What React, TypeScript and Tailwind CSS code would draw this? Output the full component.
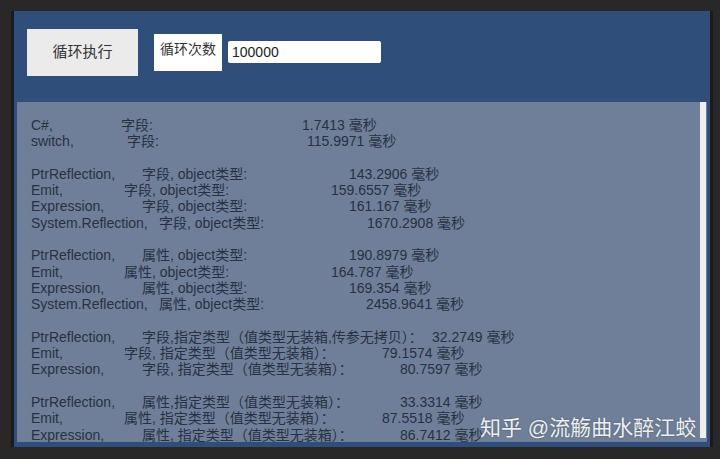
const rows: ([string, number, string, number, string] | null)[] = [
  ["C#,", 122, "字段:", 303, "1.7413 毫秒"],
  ["switch,", 128, "字段:", 308, "115.9971 毫秒"],
  null,
  ["PtrReflection,", 143, "字段, object类型:", 350, "143.2906 毫秒"],
  ["Emit,", 125, "字段, object类型:", 332, "159.6557 毫秒"],
  ["Expression,", 143, "字段, object类型:", 350, "161.167 毫秒"],
  ["System.Reflection,", 160, "字段, object类型:", 368, "1670.2908 毫秒"],
  null,
  ["PtrReflection,", 143, "属性, object类型:", 350, "190.8979 毫秒"],
  ["Emit,", 125, "属性, object类型:", 332, "164.787 毫秒"],
  ["Expression,", 143, "属性, object类型:", 350, "169.354 毫秒"],
  ["System.Reflection,", 160, "属性, object类型:", 367, "2458.9641 毫秒"],
  null,
  ["PtrReflection,", 143, "字段,指定类型（值类型无装箱,传参无拷贝）：", 433, "32.2749 毫秒"],
  ["Emit,", 125, "字段, 指定类型（值类型无装箱）：", 383, "79.1574 毫秒"],
  ["Expression,", 143, "字段, 指定类型（值类型无装箱）：", 401, "80.7597 毫秒"],
  null,
  ["PtrReflection,", 143, "属性,指定类型（值类型无装箱）：", 401, "33.3314 毫秒"],
  ["Emit,", 125, "属性, 指定类型（值类型无装箱）：", 383, "87.5518 毫秒"],
  ["Expression,", 143, "属性, 指定类型（值类型无装箱）：", 401, "86.7412 毫秒"],
];

const LEFT = 32;

function ResultLine({ row }: { row: [string, number, string, number, string] }) {
  const [a, bx, b, cx, c] = row;
  return (
    <div className="flex whitespace-nowrap">
      <span className="shrink-0" style={{ width: bx - LEFT }}>
        {a}
      </span>
      <span className="shrink-0" style={{ width: cx - bx }}>
        {b}
      </span>
      <span className="shrink-0">{c}</span>
    </div>
  );
}

export default function App() {
  return (
    <div
      className="w-[720px] h-[459px] bg-[#282828] pt-[11px] overflow-hidden"
      style={{ fontFamily: '"Liberation Sans", "Noto Sans CJK SC", sans-serif' }}
    >
      <div className="ml-[11px] w-[702px] h-[436px] bg-[#2f4e79] border-l-[3px] border-r-[3px] border-[#1b1b1b] flex flex-col">
        {/* top controls */}
        <div className="h-[91px] flex items-start pl-[13px] pt-[18px] shrink-0">
          <button className="w-[111px] h-[47px] bg-[#ebebeb] text-[#333] text-[15px] flex items-center justify-center">
            循环执行
          </button>
          <div className="ml-[16px] mt-[5px] w-[68px] h-[37px] bg-white text-[#333] text-[14px] text-center pt-[5px]">
            循环次数
          </div>
          <div className="ml-[6px] mt-[12px] w-[153px] h-[22px] bg-white text-[#222] text-[14px] leading-[22px] pl-[4px] rounded-[2px]">
            100000
          </div>
        </div>

        {/* results */}
        <div className="relative mx-[3px] h-[340px] bg-[#6f7f99] overflow-hidden pl-[14px] pt-[15px] text-[14px] leading-[16.3px] text-[#283142]">
          {rows.map((row, i) =>
            row ? <ResultLine key={i} row={row} /> : <div key={i} className="h-[16.3px]" />
          )}
          <div className="absolute right-[1px] top-0 bottom-[4px] w-[6px] bg-[#eeeeee]" />
          <div className="absolute left-[463px] top-[313px] text-[21px] leading-[26px] text-white/90 whitespace-nowrap [text-shadow:0_0_2px_rgba(0,0,0,0.35)]">
            知乎 @流觞曲水醉江蛟
          </div>
        </div>
      </div>
    </div>
  );
}
